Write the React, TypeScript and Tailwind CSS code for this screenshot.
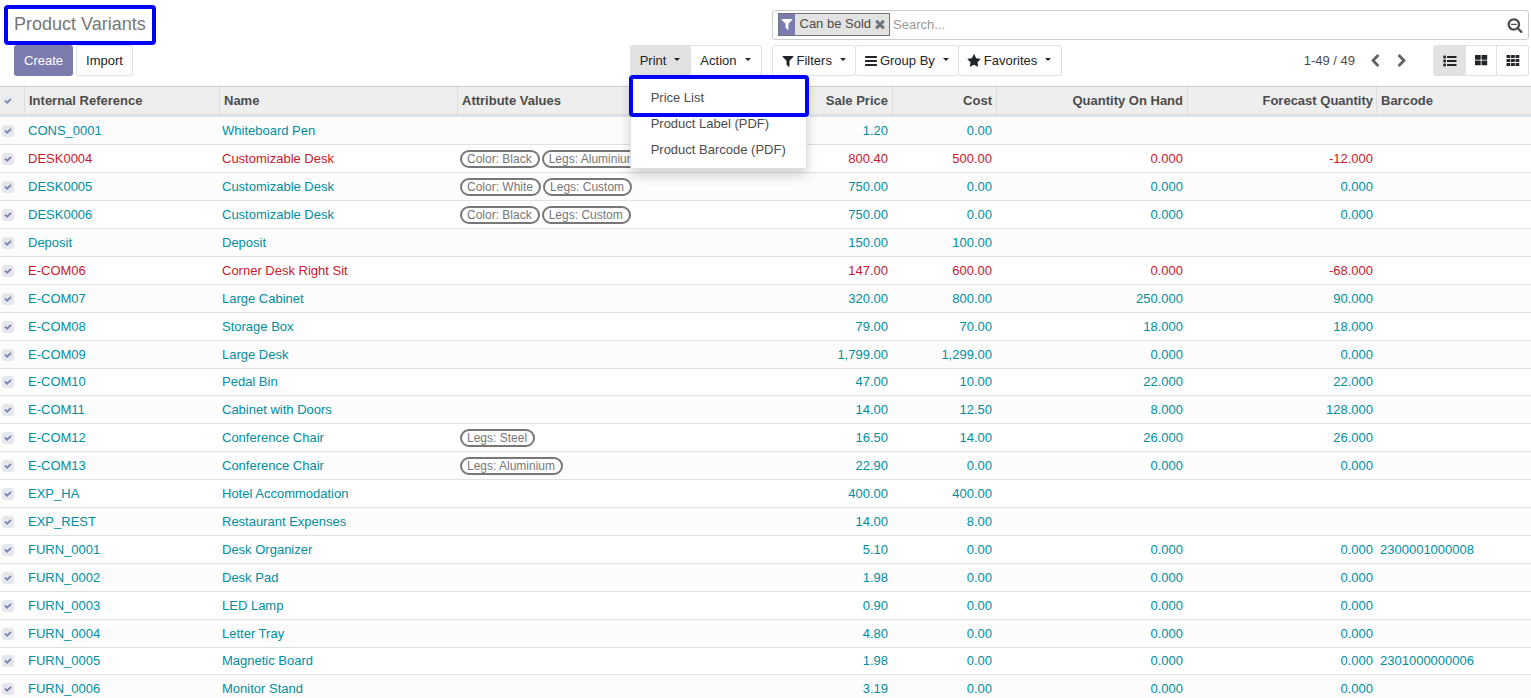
import React from "react";

type IconProps = { d: string; className?: string };

function Icon({ d, className = "size-[14px]" }: IconProps) {
  return (
    <svg viewBox="0 0 1792 1792" fill="currentColor" aria-hidden="true" className={`shrink-0 ${className}`}>
      <path d={d} />
    </svg>
  );
}

const ICONS = {
  filter:
    "M1595 295q17 41-14 70l-493 493v742q0 42-39 59-13 5-25 5-27 0-45-19l-256-256q-19-19-19-45v-486l-493-493q-31-29-14-70 17-39 59-39h1280q42 0 59 39z",
  bars:
    "M1664 1344v128q0 26-19 45t-45 19h-1408q-26 0-45-19t-19-45v-128q0-26 19-45t45-19h1408q26 0 45 19t19 45zm0-512v128q0 26-19 45t-45 19h-1408q-26 0-45-19t-19-45v-128q0-26 19-45t45-19h1408q26 0 45 19t19 45zm0-512v128q0 26-19 45t-45 19h-1408q-26 0-45-19t-19-45v-128q0-26 19-45t45-19h1408q26 0 45 19t19 45z",
  star:
    "M1728 647q0 22-26 48l-363 354 86 500q1 7 1 20 0 21-10.5 35.5t-30.5 14.5q-19 0-40-12l-449-236-449 236q-22 12-40 12-21 0-31.5-14.5t-10.5-35.5q0-6 2-20l86-500-364-354q-25-27-25-48 0-37 56-46l502-73 225-455q19-41 49-41t49 41l225 455 502 73q56 9 56 46z",
  times:
    "M1490 1322q0 40-28 68l-136 136q-28 28-68 28t-68-28l-294-294-294 294q-28 28-68 28t-68-28l-136-136q-28-28-28-68t28-68l294-294-294-294q-28-28-28-68t28-68l136-136q28-28 68-28t68 28l294 294 294-294q28-28 68-28t68 28l136 136q28 28 28 68t-28 68l-294 294 294 294q28 28 28 68z",
  searchMinus:
    "M1088 800v64q0 13-9.5 22.5t-22.5 9.5h-576q-13 0-22.5-9.5t-9.5-22.5v-64q0-13 9.5-22.5t22.5-9.5h576q13 0 22.5 9.5t9.5 22.5zm128 32q0-185-131.5-316.5t-316.5-131.5-316.5 131.5-131.5 316.5 131.5 316.5 316.5 131.5 316.5-131.5 131.5-316.5zm512 832q0 53-37.5 90.5t-90.5 37.5q-54 0-90-38l-343-342q-179 124-399 124-143 0-273.5-55.5t-225-150-150-225-55.5-273.5 55.5-273.5 150-225 225-150 273.5-55.5 273.5 55.5 225 150 150 225 55.5 273.5q0 220-124 399l343 343q37 37 37 90z",
  check:
    "M1671 566q0 40-28 68l-724 724-136 136q-28 28-68 28t-68-28l-136-136-362-362q-28-28-28-68t28-68l136-136q28-28 68-28t68 28l294 295 656-657q28-28 68-28t68 28l136 136q28 28 28 68z",
  left:
    "M1427 301l-531 531 531 531q19 19 19 45t-19 45l-166 166q-19 19-45 19t-45-19l-742-742q-19-19-19-45t19-45l742-742q19-19 45-19t45 19l166 166q19 19 19 45t-19 45z",
  right:
    "M1363 877l-742 742q-19 19-45 19t-45-19l-166-166q-19-19-19-45t19-45l531-531-531-531q-19-19-19-45t19-45l166-166q19-19 45-19t45 19l742 742q19 19 19 45t-19 45z",
};

function ListIcon() {
  return (
    <svg viewBox="0 0 14 12" fill="currentColor" aria-hidden="true" className="h-3 w-[14px]">
      {[0.5, 4.5, 8.5].map((y) => (
        <React.Fragment key={y}>
          <rect x="0.3" y={y} width="2.7" height="3" rx="1" />
          <rect x="4" y={y + 0.5} width="9.5" height="2" rx="0.3" />
        </React.Fragment>
      ))}
    </svg>
  );
}

function KanbanIcon() {
  return (
    <svg viewBox="0 0 13 11" fill="currentColor" aria-hidden="true" className="h-[11px] w-[13px]">
      {[0, 6.5].map((x) =>
        [0, 5.5].map((y) => <rect key={`${x}-${y}`} x={x} y={y} width="5.7" height="4.8" rx="0.6" />)
      )}
    </svg>
  );
}

function GridIcon() {
  return (
    <svg viewBox="0 0 14 11" fill="currentColor" aria-hidden="true" className="h-[11px] w-[14px]">
      {[0.5, 5, 9.5].map((x) =>
        [0, 4, 8].map((y) => <rect key={`${x}-${y}`} x={x} y={y} width="3.8" height="3" rx="0.5" />)
      )}
    </svg>
  );
}

function Caret() {
  return <span className="mb-0.5 ml-2 border-x-[3px] border-t-[3px] border-x-transparent border-t-[#212529]" />;
}

function Check({ label, header = false }: { label: string; header?: boolean }) {
  return (
    <label className="relative ml-0.5 flex size-3 items-center justify-center">
      <input
        type="checkbox"
        defaultChecked
        aria-label={label}
        className={`peer absolute inset-0 appearance-none rounded-[3px] ${header ? "bg-[#e9ecef]" : "bg-[#e4e7ec]"}`}
      />
      <span className="invisible relative text-[#7c7bad] peer-checked:visible">
        <Icon d={ICONS.check} className="size-2" />
      </span>
    </label>
  );
}

type Row = {
  ref: string;
  name: string;
  tags?: string[];
  price: string;
  cost: string;
  onHand?: string;
  forecast?: string;
  barcode?: string;
  danger?: boolean;
};

const ROWS: Row[] = [
  { ref: "CONS_0001", name: "Whiteboard Pen", price: "1.20", cost: "0.00" },
  { ref: "DESK0004", name: "Customizable Desk", tags: ["Color: Black", "Legs: Aluminium"], price: "800.40", cost: "500.00", onHand: "0.000", forecast: "-12.000", danger: true },
  { ref: "DESK0005", name: "Customizable Desk", tags: ["Color: White", "Legs: Custom"], price: "750.00", cost: "0.00", onHand: "0.000", forecast: "0.000" },
  { ref: "DESK0006", name: "Customizable Desk", tags: ["Color: Black", "Legs: Custom"], price: "750.00", cost: "0.00", onHand: "0.000", forecast: "0.000" },
  { ref: "Deposit", name: "Deposit", price: "150.00", cost: "100.00" },
  { ref: "E-COM06", name: "Corner Desk Right Sit", price: "147.00", cost: "600.00", onHand: "0.000", forecast: "-68.000", danger: true },
  { ref: "E-COM07", name: "Large Cabinet", price: "320.00", cost: "800.00", onHand: "250.000", forecast: "90.000" },
  { ref: "E-COM08", name: "Storage Box", price: "79.00", cost: "70.00", onHand: "18.000", forecast: "18.000" },
  { ref: "E-COM09", name: "Large Desk", price: "1,799.00", cost: "1,299.00", onHand: "0.000", forecast: "0.000" },
  { ref: "E-COM10", name: "Pedal Bin", price: "47.00", cost: "10.00", onHand: "22.000", forecast: "22.000" },
  { ref: "E-COM11", name: "Cabinet with Doors", price: "14.00", cost: "12.50", onHand: "8.000", forecast: "128.000" },
  { ref: "E-COM12", name: "Conference Chair", tags: ["Legs: Steel"], price: "16.50", cost: "14.00", onHand: "26.000", forecast: "26.000" },
  { ref: "E-COM13", name: "Conference Chair", tags: ["Legs: Aluminium"], price: "22.90", cost: "0.00", onHand: "0.000", forecast: "0.000" },
  { ref: "EXP_HA", name: "Hotel Accommodation", price: "400.00", cost: "400.00" },
  { ref: "EXP_REST", name: "Restaurant Expenses", price: "14.00", cost: "8.00" },
  { ref: "FURN_0001", name: "Desk Organizer", price: "5.10", cost: "0.00", onHand: "0.000", forecast: "0.000", barcode: "2300001000008" },
  { ref: "FURN_0002", name: "Desk Pad", price: "1.98", cost: "0.00", onHand: "0.000", forecast: "0.000" },
  { ref: "FURN_0003", name: "LED Lamp", price: "0.90", cost: "0.00", onHand: "0.000", forecast: "0.000" },
  { ref: "FURN_0004", name: "Letter Tray", price: "4.80", cost: "0.00", onHand: "0.000", forecast: "0.000" },
  { ref: "FURN_0005", name: "Magnetic Board", price: "1.98", cost: "0.00", onHand: "0.000", forecast: "0.000", barcode: "2301000000006" },
  { ref: "FURN_0006", name: "Monitor Stand", price: "3.19", cost: "0.00", onHand: "0.000", forecast: "0.000" },
];

const BUTTON = "flex h-[31px] items-center whitespace-nowrap border border-[#dee2e6] text-[#212529]";
const HEAD = "border-r border-[#dcdcde] px-1 font-bold";

function PrintMenu() {
  return (
    <div className="relative">
      <button type="button" aria-expanded="true" className={`${BUTTON} rounded-l-[3px] bg-[#e2e2e3] pl-[9px] pr-2.5`}>
        Print
        <Caret />
      </button>
      <ul className="absolute left-0 top-full z-10 w-[177px] rounded-[3px] border border-[#dee2e6] bg-white pb-[5px] pt-2 text-[#4c4c4c] shadow-[0_6px_12px_rgba(0,0,0,0.18)]">
        {["Price List", "Product Label (PDF)", "Product Barcode (PDF)"].map((item, i) => (
          <li key={item}>
            <a href="#" className="flex h-[26px] items-center whitespace-nowrap px-5">
              {item}
            </a>
            {i === 0 && (
              <span className="pointer-events-none absolute -left-0.5 -right-[3px] -top-0.5 h-[42px] rounded-sm border-4 border-[#0000ff]" />
            )}
          </li>
        ))}
      </ul>
    </div>
  );
}

function ControlPanel() {
  return (
    <header className="grid grid-cols-2 pt-[5px]">
      <div className="flex flex-col pl-1 pr-1">
        <h1 className="flex h-10 items-center self-start whitespace-nowrap rounded-sm border-4 border-[#0000ff] px-1.5 pb-0.5 text-[18px] text-[#777777]">
          Product Variants
        </h1>
        <div className="flex pl-2.5">
          <button type="button" className="h-[31px] rounded-[3px] bg-[#7c7bad] px-2.5 text-white">
            Create
          </button>
          <button type="button" className={`${BUTTON} ml-[3px] rounded-[3px] bg-white px-[9px]`}>
            Import
          </button>
          <div className="ml-auto flex">
            <PrintMenu />
            <button type="button" className={`${BUTTON} rounded-r-[3px] border-l-0 bg-white pl-[9px] pr-2.5`}>
              Action
              <Caret />
            </button>
          </div>
        </div>
      </div>

      <div className="flex flex-col pl-1.5 pr-0.5 pt-[5px]">
        <div className="flex h-[30px] items-center rounded-[3px] border border-[#cccccc] bg-white pl-[5px] pr-[5px]">
          <div className="mb-0.5 flex h-[23px] items-stretch border border-[#6c757d] bg-[#e2e2e0] text-[#4c4c4c]">
            <span className="flex w-4 items-center justify-center bg-[#7c7bad] text-white">
              <Icon d={ICONS.filter} />
            </span>
            <span className="whitespace-nowrap pl-[5px] pr-0.5 leading-5">Can be Sold</span>
            <button type="button" aria-label="Remove filter" className="flex w-4 items-center text-[#6c757d]">
              <Icon d={ICONS.times} />
            </button>
          </div>
          <input
            type="text"
            aria-label="Search"
            placeholder="Search..."
            className="ml-[3px] min-w-0 flex-1 bg-transparent text-[#4c4c4c] outline-none placeholder:text-[#999999]"
          />
          <button type="button" aria-label="Advanced search" className="text-[#4c4c4c]">
            <Icon d={ICONS.searchMinus} className="size-4" />
          </button>
        </div>

        <div className="mt-[5px] flex items-center">
          <button type="button" className={`${BUTTON} rounded-[3px] bg-white pl-2 pr-[9px]`}>
            <Icon d={ICONS.filter} className="mr-0.5 size-[14px]" />
            Filters
            <Caret />
          </button>
          <button type="button" className={`${BUTTON} -ml-px rounded-[3px] bg-white pl-2 pr-[9px]`}>
            <Icon d={ICONS.bars} className="mr-0.5 size-[14px]" />
            Group By
            <Caret />
          </button>
          <button type="button" className={`${BUTTON} -ml-px rounded-[3px] bg-white pl-2 pr-2.5`}>
            <Icon d={ICONS.star} className="mr-[3px] size-[14px]" />
            Favorites
            <Caret />
          </button>

          <span className="ml-auto whitespace-nowrap text-[#4c4c4c]">1-49 / 49</span>
          <button type="button" aria-label="Previous" className="ml-[13px] text-[#5f6468]">
            <Icon d={ICONS.left} />
          </button>
          <button type="button" aria-label="Next" className="ml-[13px] text-[#5f6468]">
            <Icon d={ICONS.right} />
          </button>
          <div className="ml-6 flex">
            <button type="button" aria-label="List view" className={`${BUTTON} w-[33px] justify-center rounded-l-[3px] bg-[#e2e2e3]`}>
              <ListIcon />
            </button>
            <button type="button" aria-label="Kanban view" className={`${BUTTON} w-[31px] justify-center border-l-0 bg-white`}>
              <KanbanIcon />
            </button>
            <button type="button" aria-label="Grid view" className={`${BUTTON} w-8 justify-center rounded-r-[3px] border-l-0 bg-white`}>
              <GridIcon />
            </button>
          </div>
        </div>
      </div>
    </header>
  );
}

export default function App() {
  return (
    <div className="h-screen overflow-hidden bg-white font-['Liberation_Sans',Arial,sans-serif] text-[13px] leading-5">
      <ControlPanel />
      <table className="mt-2.5 w-full table-fixed border-separate border-spacing-0 border-t border-[#cccccc]">
        <colgroup>
          <col className="w-[25px]" />
          <col className="w-[195px]" />
          <col className="w-[238px]" />
          <col />
          <col className="w-[103px]" />
          <col className="w-[104px]" />
          <col className="w-[191px]" />
          <col className="w-[189px]" />
          <col className="w-[154px]" />
        </colgroup>
        <thead className="bg-[#eeeeee] text-left text-[#4c4c4c]">
          <tr className="h-[30px] *:border-b-[3px] *:border-b-[#dee2e6]">
            <th className="border-r border-[#dcdcde] p-0">
              <Check label="Select all" header />
            </th>
            <th className={HEAD}>Internal Reference</th>
            <th className={HEAD}>Name</th>
            <th className="px-1 font-bold">Attribute Values</th>
            <th className={`${HEAD} text-right`}>Sale Price</th>
            <th className={`${HEAD} text-right`}>Cost</th>
            <th className={`${HEAD} text-right`}>Quantity On Hand</th>
            <th className={`${HEAD} pr-[3px] text-right`}>Forecast Quantity</th>
            <th className="px-1 font-bold">Barcode</th>
          </tr>
        </thead>
        <tbody>
          {ROWS.map((row) => (
            <tr
              key={row.ref}
              className={`h-7 whitespace-nowrap odd:bg-[#fcfcfc] nth-[10n]:h-[27px] *:border-b *:border-[#dee2e6] ${row.danger ? "text-[#c9182b]" : "text-[#008ea1]"}`}
            >
              <td className="p-0">
                <Check label={`Select ${row.ref}`} />
              </td>
              <td className="px-[3px]">{row.ref}</td>
              <td className="px-0.5">{row.name}</td>
              <td className="px-0.5">
                <div className="flex gap-0.5">
                  {row.tags?.map((tag) => (
                    <span
                      key={tag}
                      className="flex h-[18px] items-center rounded-full border-2 border-[#777777] bg-white pl-[5px] pr-1.5 text-[12px] text-[#777777]"
                    >
                      {tag}
                    </span>
                  ))}
                </div>
              </td>
              <td className="px-[5px] text-right">{row.price}</td>
              <td className="px-[5px] text-right">{row.cost}</td>
              <td className="px-[5px] text-right">{row.onHand}</td>
              <td className="px-1 text-right">{row.forecast}</td>
              <td className="px-[3px]">{row.barcode}</td>
            </tr>
          ))}
        </tbody>
      </table>
    </div>
  );
}
